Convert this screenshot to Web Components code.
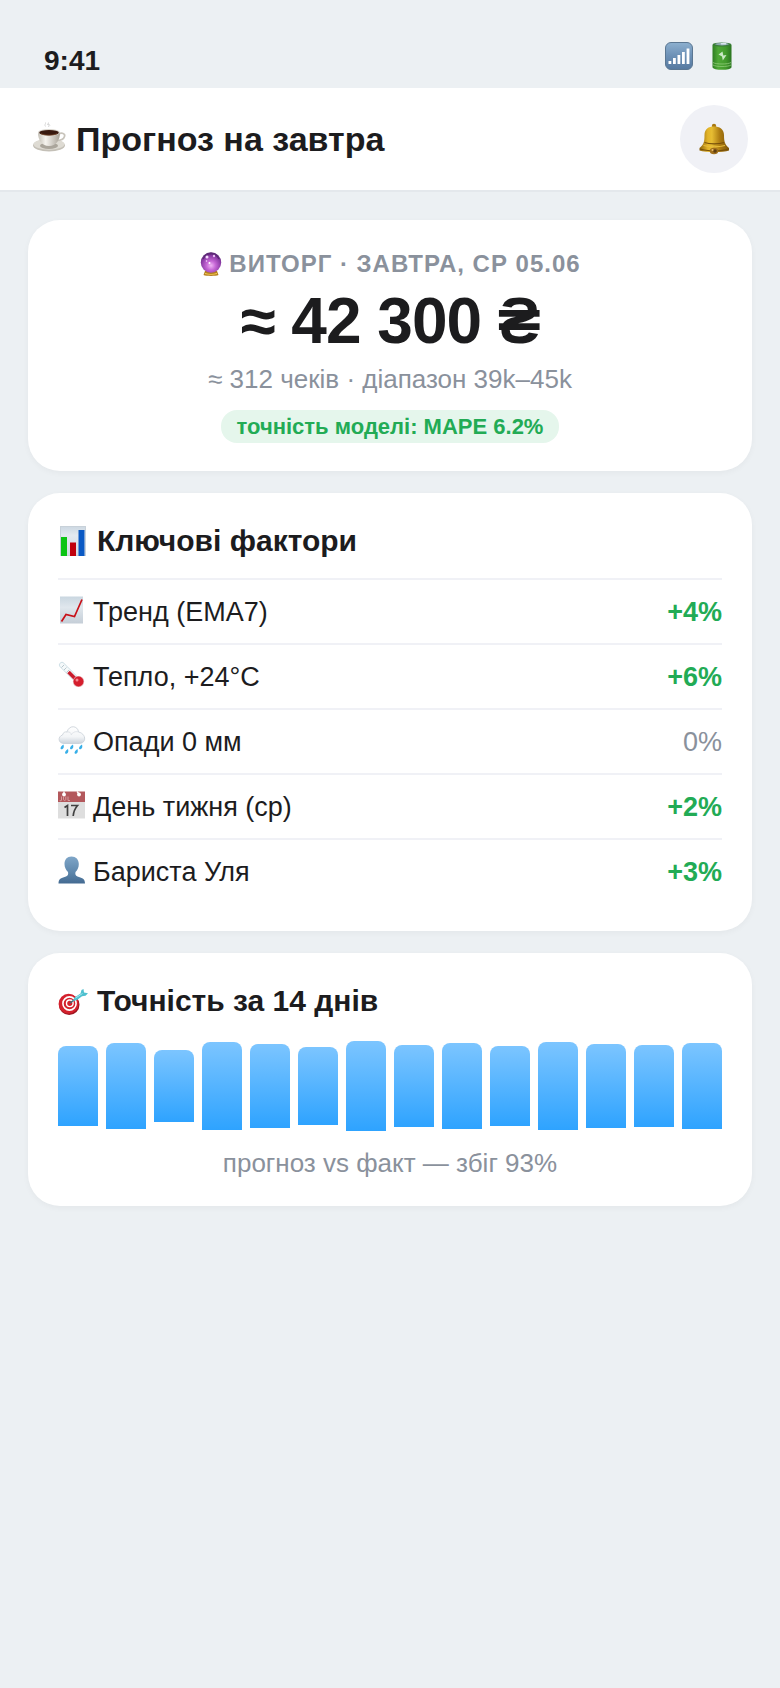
<!DOCTYPE html>
<html lang="uk">
<head>
<meta charset="utf-8">
<meta name="viewport" content="width=device-width, initial-scale=1">
<title>Прогноз на завтра</title>
<style>
  :root {
    --page: #ecf0f3;
    --ink: #1c1c1e;
    --muted: #8a919c;
    --good: #22ab55;
    --line: #f0f1f6;
  }
  body {
    margin: 0;
    background: var(--page);
    color: var(--ink);
    font-family: Helvetica, "Liberation Sans", Arial, sans-serif;
  }
</style>
</head>
<body>
<forecast-app></forecast-app>

<template id="icons">
  <svg data-name="signal" viewBox="0 0 28 28">
    <defs><linearGradient id="g" x1="0" y1="0" x2="0" y2="1"><stop offset="0" stop-color="#8db0cf"/><stop offset=".45" stop-color="#6f93b8"/><stop offset="1" stop-color="#56799f"/></linearGradient></defs>
    <rect x=".5" y=".5" width="27" height="27" rx="5.5" fill="url(#g)" stroke="#5b7792"/>
    <path d="M3.500 19h2.800v3H3.500zM8 16h2.800v6H8zM12.500 13h2.800v9h-2.800zM17 10h2.800v12H17zM21.600 6.500h2.800V22h-2.800z" fill="#fff"/>
  </svg>
  <svg data-name="battery" viewBox="0 0 28 28">
    <defs><linearGradient id="g"><stop offset="0" stop-color="#2f7d22"/><stop offset=".3" stop-color="#4fa836"/><stop offset=".7" stop-color="#429a2c"/><stop offset="1" stop-color="#2a7420"/></linearGradient></defs>
    <path d="M4.500 3v22c0 3.800 19 3.800 19 0V3z" fill="url(#g)"/>
    <path d="M5 20.500c3 2 15 2 18 0M5 23c3 2 15 2 18 0" fill="none" stroke="#8fca78" stroke-width=".8"/>
    <ellipse cx="14" cy="2.500" rx="9.500" ry="2.100" fill="#3b7d38"/>
    <ellipse cx="14" cy="2.100" rx="7" ry="1.300" fill="#8fabae"/>
    <ellipse cx="15.500" cy="1.700" rx="3" ry=".9" fill="#dae5ef"/>
    <path d="M10.500 12.500l4-3 .8 4 3.200-.5-3.700 5.500-.8-4z" fill="#c9e8c5"/>
  </svg>
  <svg data-name="coffee" viewBox="0 2 36 36">
    <defs><linearGradient id="g"><stop offset="0" stop-color="#c4c0b6"/><stop offset=".35" stop-color="#f6f4ef"/><stop offset="1" stop-color="#a8a298"/></linearGradient></defs>
    <ellipse cx="17" cy="26.300" rx="16" ry="6.200" fill="#c4c0b7"/>
    <ellipse cx="17" cy="25.300" rx="15.500" ry="5.400" fill="#dedbd3"/>
    <ellipse cx="17" cy="26.800" rx="9" ry="3.200" fill="#aaa59b"/>
    <path d="M26 15.500c4-2.500 7.500-1 6.500 2-.8 2.800-4 4-8 4" fill="none" stroke="#c8c4bb" stroke-width="1.700"/>
    <path d="M6 13.500c0 8 4 13.500 11 13.500s11-5.500 11-13.500z" fill="url(#g)"/>
    <ellipse cx="17" cy="13.500" rx="11" ry="3.400" fill="#d9d5cd"/>
    <ellipse cx="17" cy="13.700" rx="9.800" ry="2.600" fill="#38190f"/>
    <path d="M9 14.700c4 2 12 2 16 0" fill="none" stroke="#744227" stroke-width=".8"/>
    <path d="M13.500 7.500c-1.500-2 .5-2.500 0-4M16.500 8c1.500-2-1-2.500 0-4.500M15 5.500c2-1 2.500 0 3 1" fill="none" stroke="#d3d3d3" stroke-width=".9"/>
  </svg>
  <svg data-name="bell" viewBox="0 0 32 32">
    <defs><linearGradient id="g"><stop offset="0" stop-color="#8c620c"/><stop offset=".28" stop-color="#e3b428"/><stop offset=".42" stop-color="#e6bd33"/><stop offset=".68" stop-color="#ae7d12"/><stop offset="1" stop-color="#7e560b"/></linearGradient></defs>
    <circle cx="16" cy="3" r="2.200" fill="#a87811"/>
    <path d="M16 3.500c-5.500 0-9.500 2.500-9.500 8.500 0 7-.8 9.500-5 13v2.500C8 29.500 25 29.500 31 27.500V25c-4-3.500-5-6-5-13 0-6-4.500-8.500-10-8.500z" fill="url(#g)"/>
    <path d="M6.500 19.500c5 1.800 14.500 1.800 19.500 0M2 26c7 2.400 22 2.400 28.500 0" fill="none" stroke="#77500a" stroke-width="1.200"/>
    <path d="M5.500 22.500c6 1.700 16 1.700 21.500 0" fill="none" stroke="#e9bd3c"/>
    <ellipse cx="16" cy="28" rx="4.200" ry="3.200" fill="#a06f1c"/>
    <circle cx="17" cy="28" r="1.800" fill="#5d3d10"/><circle cx="14.500" cy="27" r="1" fill="#e9bd6c"/>
  </svg>
  <svg data-name="crystal" viewBox="0 0 24 24">
    <defs><radialGradient id="g" cx=".5" cy=".65" r=".65"><stop offset="0" stop-color="#f0b4f5"/><stop offset=".35" stop-color="#c566d5"/><stop offset=".75" stop-color="#8a3ba5"/><stop offset="1" stop-color="#57246f"/></radialGradient></defs>
    <path d="M6 19h12l1.500 4c-3 1.200-12 1.200-15 0z" fill="#b57f1f"/>
    <path d="M6 21.500c3 1 9 1 12 0" fill="none" stroke="#f6cf57" stroke-width="1.200"/>
    <circle cx="12" cy="10.500" r="10.200" fill="url(#g)"/>
    <path d="M4 7c2-4 5-5.500 8-5.500S18 3 20 7" fill="none" stroke="#5d2a78" stroke-width="1.500"/>
    <circle cx="8" cy="5" r="1.500" fill="#f7dcff"/><circle cx="15" cy="4" r="1.200" fill="#e9bdf3"/><circle cx="10.500" cy="11" r="1" fill="#fff"/><circle cx="7.500" cy="9" r=".8" fill="#f7dcff"/>
  </svg>
  <svg data-name="chart" viewBox="0 0 30 30">
    <defs><linearGradient id="g" x1="0" y1="0" x2="0" y2="1"><stop offset="0" stop-color="#ccd8e2"/><stop offset=".3" stop-color="#e3e9f0"/><stop offset="1" stop-color="#d2dbe4"/></linearGradient></defs>
    <rect x="2.500" y=".5" width="25" height="29" fill="url(#g)" stroke="#c8d1d9"/>
    <path d="M3 11h6v19H3z" fill="#0cc414"/><path d="M12 16.500h6V30h-6z" fill="#c0000c"/><path d="M20.500 4h6v26h-6z" fill="#0a59c4"/>
  </svg>
  <svg data-name="trend" viewBox="0 0 28 28">
    <defs><linearGradient id="g" x1="0" y1="0" x2="0" y2="1"><stop offset="0" stop-color="#c9d6e0"/><stop offset=".4" stop-color="#e0e7ed"/><stop offset="1" stop-color="#c5ced7"/></linearGradient></defs>
    <rect x="2" y=".5" width="23" height="27" fill="url(#g)"/>
    <path d="M3.500 25.500 8 18.500l8.500 2L24 3.500" fill="none" stroke="#c81018" stroke-width="1.700"/>
  </svg>
  <svg data-name="thermometer" viewBox="0 0 28 28">
    <path d="M4 4l16 16" stroke="#cfdfe6" stroke-width="6" stroke-linecap="round"/>
    <path d="M4 4l16 16" stroke="#f5f9fa" stroke-width="4.400" stroke-linecap="round"/>
    <path d="M10.500 11l9 9" stroke="#c91c2c" stroke-width="3.600"/>
    <path d="M3.500 6.500l2.500-2.500M6 9l2.500-2.500M8.500 11.500L11 9" stroke="#a9bac3" stroke-width=".8"/>
    <circle cx="20.500" cy="20.500" r="5.600" fill="#e3a8ad"/><circle cx="20.500" cy="20.500" r="4.900" fill="#d51e2d"/><circle cx="19" cy="19" r="1.500" fill="#f58a91"/>
  </svg>
  <svg data-name="rain" viewBox="0 0 28 28">
    <defs><linearGradient id="g" x1="0" y1="0" x2="0" y2="1"><stop offset="0" stop-color="#fff"/><stop offset=".6" stop-color="#f3f5f7"/><stop offset="1" stop-color="#ccd3db"/></linearGradient></defs>
    <path d="M6 17.500c-6 0-6.500-7-1.500-8.500C5 6.500 7 5.500 9 6c2-7.500 11-6.500 11.500 0C28 7.500 29 17 21.500 17.500z" fill="url(#g)" stroke="#c7ced5" stroke-width=".8"/>
    <path d="M9 6c3-.5 4 1 4.500 3M13 9c2-3 5-4 7.500-3" fill="none" stroke="#dfe3e8"/>
    <path d="M5.500 18.500c-4.500 3-3 5.500-1 4.500 1.500-.8 1.500-2.500 1-4.500zM15 18.500c-4.500 3-3 5.500-1 4.500 1.500-.8 1.500-2.500 1-4.500zM24 18.500c-4.500 3-3 5.500-1 4.500 1.500-.8 1.500-2.500 1-4.500zM10 23c-4.500 3-3 5.500-1 4.500 1.500-.8 1.500-2.500 1-4.500zM19.500 23c-4.500 3-3 5.500-1 4.500 1.500-.8 1.500-2.500 1-4.500z" fill="#37afe8"/>
  </svg>
  <svg data-name="calendar" viewBox="0 0 28 28">
    <path d="M0 10h27v17.500H0z" fill="#dedede"/><path d="M0 .5h27V11H0z" fill="#b3585c"/>
    <circle cx="6" cy="3.500" r="1.900" fill="#fff"/><circle cx="21" cy="3.500" r="1.900" fill="#fff"/>
    <path d="M6 3V.5M21 3l-2-2.500" stroke="#fff" stroke-width="1.300"/>
    <path d="M3.500 5.500v3.500c0 1-1.500 1-2 0M5.500 5.500v3c0 1.200 2.300 1.200 2.300 0v-3M10 5.500v4h2" fill="none" stroke="#d9a2a4" stroke-width=".9"/>
    <path d="M6.500 16.500l3-2V25M13 14.500h6.500c-3 3.500-4 6.500-4.300 10.500" fill="none" stroke="#404040" stroke-width="1.700"/>
  </svg>
  <svg data-name="person" viewBox="0 0 28 28">
    <defs><linearGradient id="g" x1="0" y1="0" x2="0" y2="1"><stop offset="0" stop-color="#7fa6c8"/><stop offset=".6" stop-color="#5d86ab"/><stop offset="1" stop-color="#436a91"/></linearGradient></defs>
    <path d="M13.500.5c-4.500 0-7 3-7 7.500 0 3.500 1.500 6 3.500 8 .5 2.500 0 3.500-2 4.500C4 22 .5 22 .5 27.500h26.500c0-5.500-3.500-5.500-7.500-7-2-1-2.500-2-2-4.500 2-2 3.300-4.500 3.300-8 0-4.500-2.800-7.500-7.300-7.500z" fill="url(#g)"/>
  </svg>
  <svg data-name="target" viewBox="0 0 30 30">
    <circle cx="11.200" cy="18.700" r="10.300" fill="#9d1520"/><circle cx="10.600" cy="17.800" r="10" fill="#d4212d"/>
    <circle cx="11.500" cy="17.500" r="6.600" fill="none" stroke="#fff" stroke-width="1.600"/><circle cx="11.800" cy="17.300" r="3.300" fill="none" stroke="#fff" stroke-width="1.400"/>
    <path d="M12 17l11-8" stroke="#35727c" stroke-width="1.400"/>
    <path d="M15 15l1.500-3.500 6-4L23.500 4l2-1 .5 3.500 4 .8-2.500 2.500-3.500.5-5 3.700z" fill="#4fc0cf"/><path d="M17.500 12l7-4.500" stroke="#a1e8ee" stroke-width="1"/>
  </svg>
</template>

<script>
  const define = (name, html, setup) => {
    const template = document.createElement("template");
    template.innerHTML = html;
    customElements.define(name, class extends HTMLElement {
      constructor() {
        super();
        this.attachShadow({ mode: "open" }).append(template.content.cloneNode(true));
      }
      connectedCallback() { if (setup) setup(this, this.shadowRoot); }
    });
  };

  define("app-icon", `
    <style>
      :host { display: block; flex: none; width: var(--icon-size, 28px); height: var(--icon-size, 28px); }
      svg { display: block; width: 100%; height: 100%; }
    </style>`, (el, root) => {
      const source = document.getElementById("icons").content
        .querySelector('[data-name="' + el.getAttribute("name") + '"]');
      const svg = source.cloneNode(true);
      svg.setAttribute("aria-hidden", "true");
      root.append(svg);
    });

  define("status-bar", `
    <style>
      :host { display: flex; align-items: center; justify-content: space-between; padding: 34px 44px 0; height: 54px; font-size: 28px; font-weight: 700; line-height: 32px; }
      .indicators { display: flex; gap: 15px; padding-bottom: 10px; }
    </style>
    <time><slot></slot></time>
    <div class="indicators"><app-icon name="signal"></app-icon><app-icon name="battery"></app-icon></div>`);

  define("app-header", `
    <style>
      :host { display: flex; align-items: center; justify-content: space-between; padding: 17px 32px; background: #fff; border-bottom: 2px solid #e4e8ec; }
      h1 { display: flex; align-items: center; gap: 8px; margin: 0; font-size: 34px; line-height: 40px; --icon-size: 36px; }
      button { display: grid; place-items: center; width: 68px; height: 68px; padding: 0; border: 0; border-radius: 50%; background: #f0f1f6; --icon-size: 32px; }
    </style>
    <h1><app-icon name="coffee"></app-icon><slot></slot></h1>
    <button type="button" aria-label="Сповіщення"><app-icon name="bell"></app-icon></button>`);

  define("app-card", `
    <style>
      :host { display: block; padding: 28px 30px; border-radius: 32px; background: #fff; box-shadow: 0 2px 6px rgba(0, 0, 0, .04); }
    </style>
    <slot></slot>`);

  define("card-title", `
    <style>
      :host { display: block; }
      h2 { display: flex; align-items: center; gap: 9px; margin: 0; font-size: 30px; line-height: 40px; --icon-size: 30px; }
    </style>
    <h2><slot name="icon"></slot><slot></slot></h2>`);

  define("revenue-forecast", `
    <style>
      :host { display: flex; flex-direction: column; align-items: center; text-align: center; }
      .label { display: flex; align-items: center; gap: 6px; color: var(--muted); font-size: 24px; font-weight: 700; line-height: 32px; letter-spacing: 1px; text-transform: uppercase; --icon-size: 24px; }
      .value { margin-top: 5px; font-size: 64px; font-weight: 700; line-height: 72px; letter-spacing: -1px; }
      .range { margin-top: 7px; color: var(--muted); font-size: 26px; line-height: 30px; }
      .accuracy { margin-top: 16px; padding: 4px 16px; border-radius: 16px; background: #e5f6ec; color: var(--good); font-size: 22px; font-weight: 700; line-height: 25px; }
    </style>
    <div class="label"><app-icon name="crystal"></app-icon><slot name="label"></slot></div>
    <div class="value"><slot name="value"></slot></div>
    <div class="range"><slot name="range"></slot></div>
    <div class="accuracy"><slot name="accuracy"></slot></div>`);

  define("factor-row", `
    <style>
      :host { display: flex; align-items: center; justify-content: space-between; padding: 16px 0 15px; border-top: 2px solid var(--line); font-size: 27px; line-height: 32px; }
      .name { display: flex; align-items: center; gap: 7px; }
      ::slotted(app-icon) { margin-bottom: 4px; }
      .effect { color: var(--good); font-weight: 700; }
      :host([neutral]) .effect { color: var(--muted); font-weight: 400; }
    </style>
    <span class="name"><slot name="icon"></slot><slot></slot></span>
    <span class="effect"><slot name="effect"></slot></span>`, el => el.setAttribute("role", "listitem"));

  define("factor-list", `
    <style>:host { display: block; margin-top: 17px; }</style>
    <slot></slot>`, el => el.setAttribute("role", "list"));

  define("accuracy-chart", `
    <style>
      :host { display: block; }
      .bars { display: flex; align-items: center; gap: 8px; height: 90px; margin: 20px 0 17px; }
      .bars span { flex: 1; border-radius: 8px 8px 0 0; background: linear-gradient(#7cc5ff, #2ea3ff); }
      p { margin: 0; color: var(--muted); font-size: 26px; line-height: 30px; text-align: center; }
    </style>
    <div class="bars" role="img" aria-label="Точність за 14 днів"></div>
    <p><slot></slot></p>`, (el, root) => {
      root.querySelector(".bars").append(...el.getAttribute("values").split(" ").map(value => {
        const bar = document.createElement("span");
        bar.style.height = value + "px";
        return bar;
      }));
    });

  define("forecast-app", `
    <style>
      :host { display: block; min-height: 100vh; }
      main { display: grid; gap: 22px; padding: 28px; }
    </style>
    <status-bar>9:41</status-bar>
    <app-header>Прогноз на завтра</app-header>
    <main>
      <app-card>
        <revenue-forecast>
          <span slot="label">Виторг · завтра, ср 05.06</span>
          <span slot="value">≈ 42 300 ₴</span>
          <span slot="range">≈ 312 чеків · діапазон 39k–45k</span>
          <span slot="accuracy">точність моделі: MAPE 6.2%</span>
        </revenue-forecast>
      </app-card>
      <app-card>
        <card-title><app-icon slot="icon" name="chart"></app-icon>Ключові фактори</card-title>
        <factor-list>
          <factor-row><app-icon slot="icon" name="trend"></app-icon>Тренд (EMA7)<span slot="effect">+4%</span></factor-row>
          <factor-row><app-icon slot="icon" name="thermometer"></app-icon>Тепло, +24°C<span slot="effect">+6%</span></factor-row>
          <factor-row neutral><app-icon slot="icon" name="rain"></app-icon>Опади 0 мм<span slot="effect">0%</span></factor-row>
          <factor-row><app-icon slot="icon" name="calendar"></app-icon>День тижня (ср)<span slot="effect">+2%</span></factor-row>
          <factor-row><app-icon slot="icon" name="person"></app-icon>Бариста Уля<span slot="effect">+3%</span></factor-row>
        </factor-list>
      </app-card>
      <app-card>
        <card-title><app-icon slot="icon" name="target"></app-icon>Точність за 14 днів</card-title>
        <accuracy-chart values="80 86 72 88 84 78 90 82 86 80 88 84 82 86">прогноз vs факт — збіг 93%</accuracy-chart>
      </app-card>
    </main>`);
</script>
</body>
</html>
